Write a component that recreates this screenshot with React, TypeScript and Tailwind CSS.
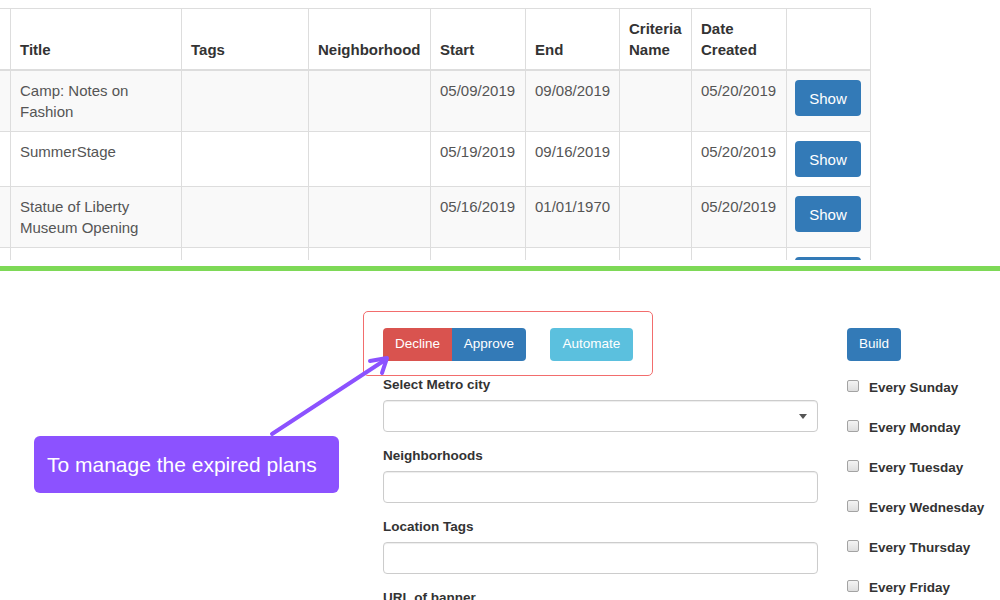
import React from "react";

const cols = [11, 171, 127, 122, 95, 94, 72, 95, 84];

type Row = { title: React.ReactNode; start: string; end: string; created: string };

const rows: Row[] = [
  { title: <>Camp: Notes on<br />Fashion</>, start: "05/09/2019", end: "09/08/2019", created: "05/20/2019" },
  { title: "SummerStage", start: "05/19/2019", end: "09/16/2019", created: "05/20/2019" },
  { title: <>Statue of Liberty<br />Museum Opening</>, start: "05/16/2019", end: "01/01/1970", created: "05/20/2019" },
  { title: "", start: "", end: "", created: "" },
];

const th = "border-r border-t border-b-2 border-[#dddddd] px-[9px] pt-[9px] pb-[9px] text-left align-bottom font-bold text-[#333333]";
const td = "border-r border-b border-[#dddddd] px-[9px] py-[9px] align-top text-[#555555]";

function ShowBtn() {
  return (
    <div className="-ml-[1px] flex h-[36px] w-[66px] items-center justify-center rounded-[4px] bg-[#337ab7] text-[15px] text-white">
      Show
    </div>
  );
}

function Field({ label, select }: { label: string; select?: boolean }) {
  return (
    <div className="mt-[13px]">
      <div className="pt-[1px] text-[13.5px] font-bold leading-[20px] text-[#333333]">{label}</div>
      <div className="relative mt-[5px] h-[32px] w-full rounded-[4px] border border-[#cccccc] bg-white shadow-[inset_0_1px_1px_rgba(0,0,0,0.075)]">
        {select && (
          <span className="absolute right-[10px] top-[13px] h-0 w-0 border-l-[4px] border-r-[4px] border-t-[5px] border-l-transparent border-r-transparent border-t-[#555555]" />
        )}
      </div>
    </div>
  );
}

const days = ["Every Sunday", "Every Monday", "Every Tuesday", "Every Wednesday", "Every Thursday", "Every Friday"];

export default function App() {
  return (
    <div
      className="relative h-[600px] w-[1000px] overflow-hidden bg-white"
      style={{ fontFamily: '"Liberation Sans", Arial, sans-serif' }}
    >
      {/* Table section */}
      <div className="h-[260px] overflow-hidden pt-[8px]">
        <table className="w-[871px] table-fixed border-separate border-spacing-0 text-[15px] leading-[21px]">
          <colgroup>
            {cols.map((w, i) => (
              <col key={i} style={{ width: w }} />
            ))}
          </colgroup>
          <thead>
            <tr className="bg-white">
              <th className={th}></th>
              <th className={th}>Title</th>
              <th className={th}>Tags</th>
              <th className={th}>Neighborhood</th>
              <th className={th}>Start</th>
              <th className={th}>End</th>
              <th className={th}>Criteria<br />Name</th>
              <th className={th}>Date<br />Created</th>
              <th className={th}></th>
            </tr>
          </thead>
          <tbody>
            {rows.map((r, i) => (
              <tr key={i} className={i % 2 === 0 ? "bg-[#f9f9f9]" : "bg-white"}>
                <td className={td}></td>
                <td className={td}>{r.title}</td>
                <td className={td}></td>
                <td className={td}></td>
                <td className={td}>{r.start}</td>
                <td className={td}>{r.end}</td>
                <td className={td}></td>
                <td className={td}>{r.created}</td>
                <td className={td}>
                  <ShowBtn />
                </td>
              </tr>
            ))}
          </tbody>
        </table>
      </div>
      <div className="h-[6px]" />
      <div className="h-[5px] bg-[#7ed957]" />

      {/* Form section */}
      <div className="flex pt-[57px]">
        <div className="w-[383px] shrink-0" />
        <div className="w-[435px] shrink-0">
          <div className="flex h-[33px] items-stretch">
            <div className="flex">
              <div className="flex w-[69px] items-center justify-center rounded-l-[4px] bg-[#d9534f] text-[13.5px] text-white">
                Decline
              </div>
              <div className="flex w-[74px] items-center justify-center rounded-r-[4px] bg-[#337ab7] text-[13.5px] text-white">
                Approve
              </div>
            </div>
            <div className="ml-[24px] flex w-[83px] items-center justify-center rounded-[4px] bg-[#5bc0de] text-[13.5px] text-white">
              Automate
            </div>
          </div>
          <Field label="Select Metro city" select />
          <Field label="Neighborhoods" />
          <Field label="Location Tags" />
          <Field label="URL of banner" />
        </div>
        <div className="ml-[29px] shrink-0">
          <div className="flex h-[33px] w-[54px] items-center justify-center rounded-[4px] bg-[#337ab7] text-[13.5px] text-white">
            Build
          </div>
          <div className="mt-[17px] flex flex-col gap-[20px]">
            {days.map((d) => (
              <div key={d} className="flex h-[20px] items-center">
                <span className="mb-[4px] h-[12px] w-[12px] rounded-[2px] border border-[#a3a3a3] bg-gradient-to-b from-[#f4f4f4] to-[#dedede]" />
                <span className="ml-[10px] text-[13.5px] font-bold leading-[20px] text-[#333333]">{d}</span>
              </div>
            ))}
          </div>
        </div>
      </div>

      {/* Annotation overlays */}
      <div className="pointer-events-none absolute left-[363px] top-[311px] h-[65px] w-[290px] rounded-[5px] border border-[#f26d6d]" />
      <svg className="pointer-events-none absolute left-0 top-0" width="1000" height="600">
        <line x1="272" y1="434" x2="385" y2="360" stroke="#8c52ff" strokeWidth="4" strokeLinecap="round" />
        <polyline
          points="370,361 387,358 382,373"
          fill="none"
          stroke="#8c52ff"
          strokeWidth="4"
          strokeLinecap="round"
          strokeLinejoin="round"
        />
      </svg>
      <div className="absolute left-[34px] top-[436px] flex h-[57px] w-[305px] items-center rounded-[6px] bg-[#8c52ff] pl-[13px] text-[21px] text-white">
        To manage the expired plans
      </div>
    </div>
  );
}
